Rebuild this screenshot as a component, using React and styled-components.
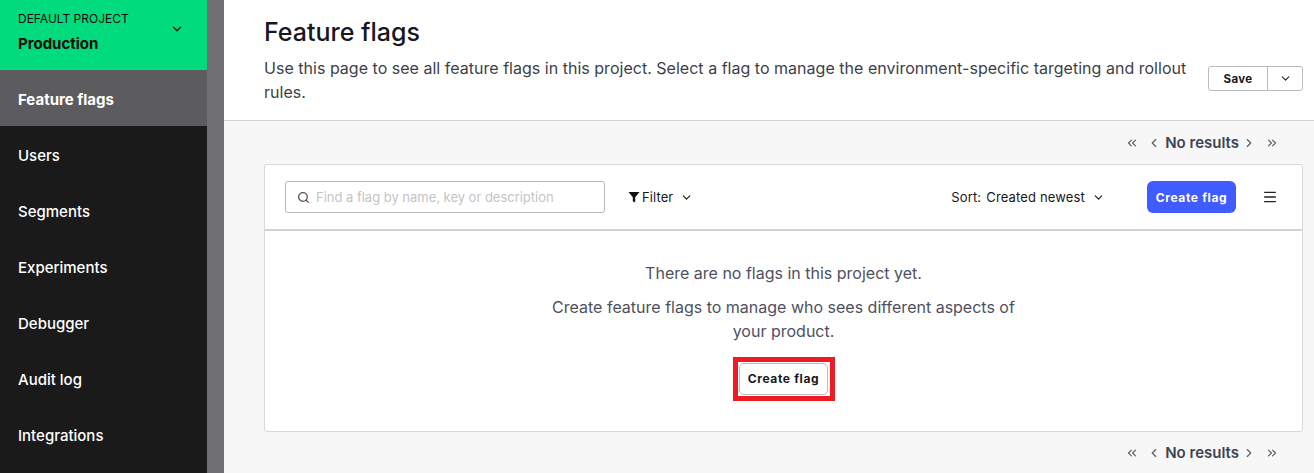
import React from "react";
import styled, { createGlobalStyle } from "styled-components";
import { ChevronDown, ChevronLeft, ChevronRight, ChevronsLeft, ChevronsRight, Search, Menu } from "lucide-react";

const Global = createGlobalStyle`
  html, body { margin: 0; padding: 0; height: 100%; overflow: hidden; }
  body { font-family: Inter, "Liberation Sans", sans-serif; }
  * { box-sizing: border-box; }
`;
const Page = styled.div`display: flex; width: 1314px; height: 473px; overflow: hidden; background: #f7f7f7;`;
const Sidebar = styled.nav`width: 207px; flex: none; background: #1a1a1a; display: flex; flex-direction: column;`;
const Gutter = styled.div`width: 17px; flex: none; background: #6f6f71;`;
const Switcher = styled.div`
  height: 70px; background: #00dc7d; color: #0a0a0a; padding: 12px 23px 0 18px;
  display: flex; justify-content: space-between; align-items: flex-start;
`;
const ProjectLabel = styled.div`font-size: 12px; line-height: 14px;`;
const EnvName = styled.div`font-size: 15px; line-height: 18px; font-weight: 700; margin-top: 9px;`;
const SwitchIcon = styled.span`display: flex; margin-top: 10px; color: #111;`;
const NavItem = styled.a`
  height: 56px; flex: none; display: flex; align-items: center; padding: 2px 18px 0;
  font-size: 15px; color: #fff; font-weight: ${p => (p.$active ? 700 : 500)};
  background: ${p => (p.$active ? "#5c5c5e" : "transparent")};
`;
const Main = styled.main`flex: 1; min-width: 0; display: flex; flex-direction: column;`;
const Header = styled.header`
  height: 121px; flex: none; background: #fff; border-bottom: 1px solid #d2d2d2;
  padding: 18px 11px 0 40px; display: flex; align-items: flex-start; justify-content: space-between;
`;
const HeaderText = styled.div`width: 930px;`;
const Title = styled.h1`margin: 0; font-size: 25px; line-height: 29px; font-weight: 500; color: #17171c;`;
const Lead = styled.p`margin: 9px 0 0; font-size: 16px; line-height: 24px; letter-spacing: .02px; color: #3c3f4a;`;
const SplitButton = styled.div`
  display: flex; height: 25px; margin-top: 48px; border: 1px solid #bcbcbc; border-radius: 3px; background: #fff;
`;
const SaveLabel = styled.span`
  width: 59px; display: flex; align-items: center; justify-content: center;
  font-size: 11.5px; font-weight: 700; color: #17171c; letter-spacing: .35px; border-right: 1px solid #bcbcbc;
`;
const SplitCaret = styled.span`width: 34px; display: flex; align-items: center; justify-content: center; color: #222;`;
const Content = styled.div`padding: 0 11px 0 40px; flex: 1; display: flex; flex-direction: column;`;
const Pager = styled.div`
  height: ${p => p.$h}px; display: flex; align-items: center; justify-content: flex-end; padding-right: 24px; color: #5b5e69;
`;
const PagerText = styled.span`font-size: 15px; font-weight: 600; color: #3c4454; margin: 0 3px 0 4px;`;
const GapIcon = styled.span`display: flex; margin: ${p => p.$m};`;
const Card = styled.section`
  height: 268px; flex: none; background: #fff; border: 1px solid #d8d8d8; border-radius: 3px; display: flex; flex-direction: column;
`;
const Toolbar = styled.div`
  height: 66px; flex: none; border-bottom: 2px solid #d2d2d2; display: flex; align-items: center; padding: 0 24px 0 20px;
`;
const SearchBox = styled.div`
  width: 320px; height: 32px; border: 1px solid #b8b8b8; border-radius: 3px; display: flex; align-items: center; padding-left: 11px; gap: 6px; color: #555;
`;
const Placeholder = styled.span`font-size: 13px; color: #c4c4c4; letter-spacing: -.02px;`;
const FilterGroup = styled.div`display: flex; align-items: center; margin-left: 23px; color: #17171c; font-size: 13px; letter-spacing: .1px; gap: 2px;`;
const FilterCaret = styled.span`display: flex; margin-left: 5px;`;
const Sort = styled.div`display: flex; align-items: center; margin-left: auto; font-size: 13px; letter-spacing: .15px; color: #17171c;`;
const SortValue = styled.span`margin-left: 5px;`;
const SortCaret = styled.span`display: flex; margin-left: 7px;`;
const PrimaryButton = styled.button`
  margin-left: 42px; width: 89px; height: 32px; border: none; border-radius: 6px; background: #405bff; color: #fff;
  font: 700 12px Inter, sans-serif; letter-spacing: .65px; padding: 0;
`;
const MenuIcon = styled.span`display: flex; margin-left: 26px; color: #222;`;
const Empty = styled.div`flex: 1; display: flex; flex-direction: column; align-items: center; padding-top: 33px; color: #4e5160; font-size: 16px; text-align: center;`;
const EmptyLine = styled.p`margin: 0; line-height: 19px;`;
const EmptyBody = styled.p`margin: 12px 0 0; width: 480px; line-height: 24px;`;
const Highlight = styled.div`margin-top: 14px; border: 5px solid #ed1c24; padding: 1px 2px 1px 1px; display: flex; background: #fff;`;
const OutlineButton = styled.button`
  width: 89px; height: 32px; background: #fff; border: 1px solid #bcbcbc; border-radius: 5px; color: #17171c;
  font: 700 12px Inter, sans-serif; letter-spacing: .65px; padding: 0 0 2px 1px;
`;
const FilterGlyph = () => (
  <svg width="12" height="12" viewBox="0 0 12 12" fill="#111"><path d="M0.5 1H11.5L7.2 6.3V11.5L4.8 10.2V6.3Z" /></svg>
);
const PagerRow = ({ h }) => (
  <Pager $h={h}>
    <ChevronsLeft size={14} />
    <GapIcon $m="0 0 0 8px"><ChevronLeft size={14} /></GapIcon>
    <PagerText>No results</PagerText>
    <ChevronRight size={14} />
    <GapIcon $m="0 0 0 9px"><ChevronsRight size={14} /></GapIcon>
  </Pager>
);
const items = ["Users", "Segments", "Experiments", "Debugger", "Audit log", "Integrations"];
export default function App() {
  return (
    <Page>
      <Global />
      <Sidebar>
        <Switcher>
          <div><ProjectLabel>DEFAULT PROJECT</ProjectLabel><EnvName>Production</EnvName></div>
          <SwitchIcon><ChevronDown size={14} strokeWidth={2.4} /></SwitchIcon>
        </Switcher>
        <NavItem $active>Feature flags</NavItem>
        {items.map(i => <NavItem key={i}>{i}</NavItem>)}
      </Sidebar>
      <Gutter />
      <Main>
        <Header>
          <HeaderText>
            <Title>Feature flags</Title>
            <Lead>Use this page to see all feature flags in this project. Select a flag to manage the environment-specific targeting and rollout rules.</Lead>
          </HeaderText>
          <SplitButton>
            <SaveLabel>Save</SaveLabel>
            <SplitCaret><ChevronDown size={13} /></SplitCaret>
          </SplitButton>
        </Header>
        <Content>
          <PagerRow h={43} />
          <Card>
            <Toolbar>
              <SearchBox><Search size={13} strokeWidth={2.4} /><Placeholder>Find a flag by name, key or description</Placeholder></SearchBox>
              <FilterGroup><FilterGlyph />Filter<FilterCaret><ChevronDown size={13} /></FilterCaret></FilterGroup>
              <Sort>Sort:<SortValue>Created newest</SortValue><SortCaret><ChevronDown size={13} /></SortCaret></Sort>
              <PrimaryButton>Create flag</PrimaryButton>
              <MenuIcon><Menu size={16} /></MenuIcon>
            </Toolbar>
            <Empty>
              <EmptyLine>There are no flags in this project yet.</EmptyLine>
              <EmptyBody>Create feature flags to manage who sees different aspects of your product.</EmptyBody>
              <Highlight><OutlineButton>Create flag</OutlineButton></Highlight>
            </Empty>
          </Card>
          <PagerRow h={41} />
        </Content>
      </Main>
    </Page>
  );
}
